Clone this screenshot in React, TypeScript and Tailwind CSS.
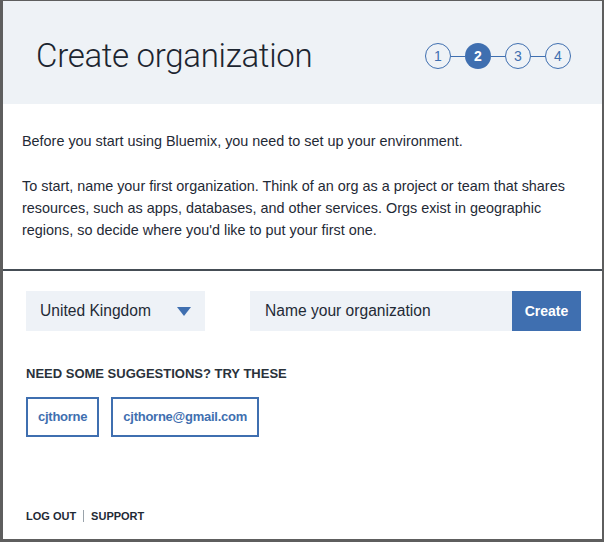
export default function App() {
  const steps = [1, 2, 3, 4];
  const chips = ['cjthorne', 'cjthorne@gmail.com'];
  return (
    <div
      className="w-[604px] h-[542px] flex flex-col bg-white border-[#5e5e5e] border-l-[3px] border-t border-r-2 border-b-[3px] text-[#1f2a36]"
      style={{ fontFamily: '"Liberation Sans", Arial, sans-serif' }}
    >
      <div className="h-[103px] bg-[#eef2f6] flex items-center justify-between pl-[33px] pr-[31px] pt-[7px]">
        <h1 className="text-[33px] tracking-[-0.3px] text-[#1c2530]" style={{ fontFamily: 'Roboto, "Liberation Sans", sans-serif', fontWeight: 300 }}>
          Create organization
        </h1>
        <div className="flex items-center">
          {steps.map((s, i) => (
            <div key={s} className="flex items-center">
              {i > 0 && <div className="w-[14px] h-px bg-[#3f6fb0]" />}
              <div
                className={
                  s === 2
                    ? 'w-[26px] h-[26px] rounded-full bg-[#3f6fb0] text-white text-[14px] font-semibold flex items-center justify-center'
                    : 'w-[26px] h-[26px] rounded-full border border-[#3f6fb0] text-[#3f6fb0] text-[14px] flex items-center justify-center'
                }
              >
                {s}
              </div>
            </div>
          ))}
        </div>
      </div>

      <div className="pl-[19px] pt-[26px] pb-[28px] text-[14.4px] leading-[22px] text-[#1f2a36]">
        <p>Before you start using Bluemix, you need to set up your environment.</p>
        <p className="mt-[23px] w-[560px]">
          To start, name your first organization. Think of an org as a project or team that shares
          resources, such as apps, databases, and other services. Orgs exist in geographic
          regions, so decide where you'd like to put your first one.
        </p>
      </div>

      <div className="h-[2px] bg-[#454d55]" />

      <div className="flex-1 flex flex-col pl-[23px] pr-[21px] pt-5">
        <div className="flex items-center">
          <div className="w-[179px] h-10 bg-[#eef2f7] flex items-center justify-between px-[14px] text-[15.6px] text-[#1f2a36]">
            <span>United Kingdom</span>
            <svg width="14" height="9" viewBox="0 0 14 9">
              <path d="M0 0 H14 L7 9 Z" fill="#3f6fb0" />
            </svg>
          </div>
          <div className="ml-[45px] flex-1 flex h-10">
            <div className="flex-1 bg-[#eef2f7] flex items-center pl-[15px] text-[15.6px] text-[#1f2a36]">
              Name your organization
            </div>
            <button className="w-[69px] bg-[#3f6fb0] text-white text-[14px] font-bold">
              Create
            </button>
          </div>
        </div>

        <div className="mt-[33px] text-[13px] font-bold text-[#2a323b]">
          NEED SOME SUGGESTIONS? TRY THESE
        </div>

        <div className="mt-[13px] flex gap-3">
          {chips.map((c) => (
            <div
              key={c}
              className="h-10 px-[10px] border-2 border-[#3f6fb0] text-[#3f6fb0] text-[13px] tracking-[-0.25px] font-bold flex items-center"
            >
              {c}
            </div>
          ))}
        </div>

        <div className="mt-auto mb-[15px] flex items-center text-[11px] font-bold text-[#1f2a36]">
          <span>LOG OUT</span>
          <span className="mx-[7px] w-px h-[12px] bg-[#9aa3ab]" />
          <span>SUPPORT</span>
        </div>
      </div>
    </div>
  );
}
